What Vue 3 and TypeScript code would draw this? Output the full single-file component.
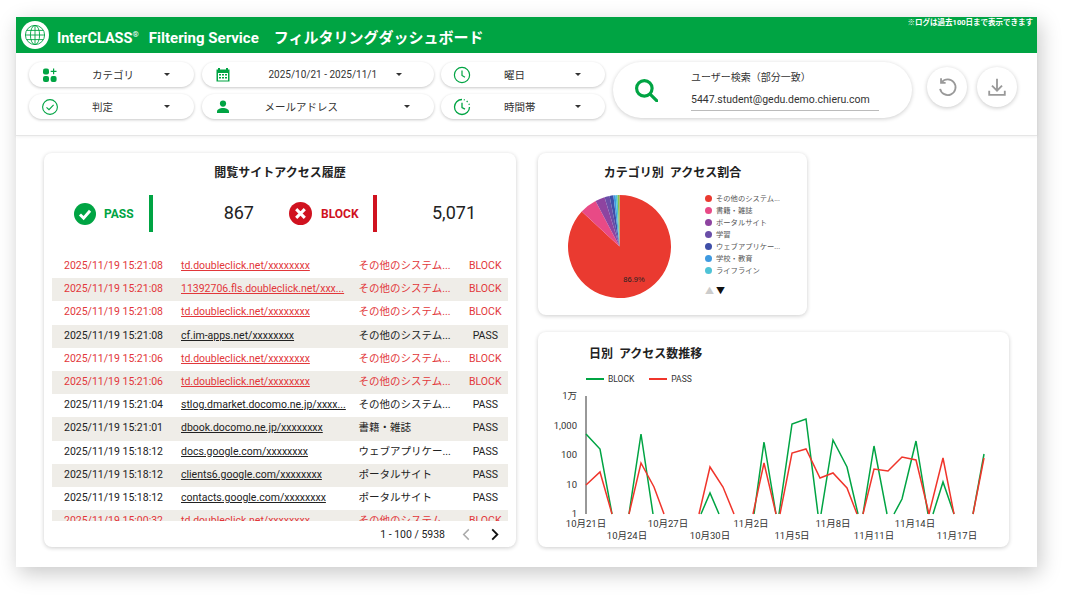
<script setup lang="ts">
type LogRow = { time: string; url: string; category: string; status: 'BLOCK' | 'PASS' }

const doubleclick = 'td.doubleclick.net/xxxxxxxx'
const other = 'その他のシステム...'

const rows: LogRow[] = [
  { time: '2025/11/19 15:21:08', url: doubleclick, category: other, status: 'BLOCK' },
  { time: '2025/11/19 15:21:08', url: '11392706.fls.doubleclick.net/xxx...', category: other, status: 'BLOCK' },
  { time: '2025/11/19 15:21:08', url: doubleclick, category: other, status: 'BLOCK' },
  { time: '2025/11/19 15:21:08', url: 'cf.im-apps.net/xxxxxxxx', category: other, status: 'PASS' },
  { time: '2025/11/19 15:21:06', url: doubleclick, category: other, status: 'BLOCK' },
  { time: '2025/11/19 15:21:06', url: doubleclick, category: other, status: 'BLOCK' },
  { time: '2025/11/19 15:21:04', url: 'stlog.dmarket.docomo.ne.jp/xxxx...', category: other, status: 'PASS' },
  { time: '2025/11/19 15:21:01', url: 'dbook.docomo.ne.jp/xxxxxxxx', category: '書籍・雑誌', status: 'PASS' },
  { time: '2025/11/19 15:18:12', url: 'docs.google.com/xxxxxxxx', category: 'ウェブアプリケー...', status: 'PASS' },
  { time: '2025/11/19 15:18:12', url: 'clients6.google.com/xxxxxxxx', category: 'ポータルサイト', status: 'PASS' },
  { time: '2025/11/19 15:18:12', url: 'contacts.google.com/xxxxxxxx', category: 'ポータルサイト', status: 'PASS' },
  { time: '2025/11/19 15:00:32', url: doubleclick, category: other, status: 'BLOCK' },
]

// pie slices, clockwise from 12 o'clock
const slices = [
  { name: 'その他のシステム...', share: 86.9, color: '#ea3a30' },
  { name: '書籍・雑誌', share: 5.4, color: '#e84a86' },
  { name: 'ポータルサイト', share: 3, color: '#8e44a0' },
  { name: '学習', share: 1.6, color: '#6a4ea8' },
  { name: 'ウェブアプリケー...', share: 1.2, color: '#3f4fa8' },
  { name: '学校・教育', share: 0.7, color: '#3f9ae0' },
  { name: 'ライフライン', share: 0.6, color: '#4fc3d6' },
  { name: 'その他', share: 0.6, color: '#8bc34a' },
]
const legend = slices.slice(0, 7)

function slicePaths() {
  const r = 51.5
  let start = 0
  return slices.map((s) => {
    const end = start + (s.share / 100) * Math.PI * 2
    const x1 = r + r * Math.sin(start)
    const y1 = r - r * Math.cos(start)
    const x2 = r + r * Math.sin(end)
    const y2 = r - r * Math.cos(end)
    const large = end - start > Math.PI ? 1 : 0
    start = end
    return { d: `M${r} ${r}L${x1} ${y1}A${r} ${r} 0 ${large} 1 ${x2} ${y2}Z`, color: s.color }
  })
}
const pie = slicePaths()

// line chart, in page coordinates (the svg viewBox starts at the card corner)
const blockLines = [
  '586,434 600,449 612,514',
  '629,514 641,434 653,514',
  '701,514 710,493 719,514',
  '754,514 764,442 776,514',
  '779,514 792,424 806,419 818,514',
  '821,514 833,440 847,467 858,514',
  '863,514 874,446 887,514',
  '894,514 902,499 916,441 928,514',
  '933,514 943,482 954,514',
  '973,514 984,454',
]
const passLines = [
  '586,485 600,472 612,514',
  '629,514 641,463 654,487 664,514',
  '699,514 710,467 723,487 734,514',
  '753,514 764,463 776,514',
  '780,514 792,453 806,449 820,478 833,473 847,488 857,514',
  '863,514 874,469 888,471 902,457 916,460 929,514',
  '929,514 943,458 954,514',
  '973,514 984,458',
]
const yTicks = [
  { label: '1万', y: 399 },
  { label: '1,000', y: 429 },
  { label: '100', y: 458 },
  { label: '10', y: 488 },
  { label: '1', y: 517 },
]
const xTicks = [
  { label: '10月21日', x: 586, y: 527 },
  { label: '10月24日', x: 627, y: 539 },
  { label: '10月27日', x: 668, y: 527 },
  { label: '10月30日', x: 710, y: 539 },
  { label: '11月2日', x: 751, y: 527 },
  { label: '11月5日', x: 792, y: 539 },
  { label: '11月8日', x: 833, y: 527 },
  { label: '11月11日', x: 874, y: 539 },
  { label: '11月14日', x: 915, y: 527 },
  { label: '11月17日', x: 957, y: 539 },
]
</script>

<template>
  <div class="page">
    <div class="window">
      <header class="topbar">
        <svg class="logo" viewBox="0 0 28 28">
          <circle cx="14" cy="14" r="14" fill="#fff" />
          <g fill="none" stroke="#00a443" stroke-width="0.9">
            <circle cx="14" cy="14" r="9.6" />
            <ellipse cx="14" cy="14" rx="4.6" ry="9.6" />
            <path d="M14 4.4v19.2M4.4 14h19.2M5.6 9.4h16.8M5.6 18.6h16.8" />
          </g>
        </svg>
        <h1 class="brand">InterCLASS<sup>®</sup><span class="brand-service">Filtering Service</span><span class="brand-jp">フィルタリングダッシュボード</span></h1>
        <span class="notice">※ログは過去100日まで表示できます</span>
      </header>

      <section class="toolbar">
        <div class="filters">
          <div class="chip">
            <svg class="chip-icon" viewBox="0 0 16 16" fill="#00a443">
              <rect x="1" y="1.5" width="6" height="6" rx="2" />
              <rect x="1" y="9" width="6" height="6" rx="2" />
              <rect x="8.6" y="9" width="6" height="6" rx="2" />
              <path d="M11 1.5h1.2v2.3h2.3V5h-2.3v2.3H11V5H8.7V3.8H11z" />
            </svg>
            <span class="chip-label">カテゴリ</span><i class="caret"></i>
          </div>
          <div class="chip">
            <svg class="chip-icon" viewBox="0 0 16 16" fill="#00a443">
              <path d="M3 1h2v1.5h6V1h2v1.500h1.500v12h-13v-12H3zM3 6v7.500h10V6z" />
              <path d="M4 7h2v1.500H4zM7 7h2v1.500H7zM10 7h2v1.500h-2zM4 10h2v1.500H4zM7 10h2v1.500H7zM10 10h2v1.500h-2z" />
            </svg>
            <span class="chip-label chip-label--date">2025/10/21 - 2025/11/1</span><i class="caret caret--date"></i>
          </div>
          <div class="chip">
            <svg class="chip-icon chip-icon--lg" viewBox="0 0 18 18" fill="none" stroke="#00a443" stroke-width="1.2">
              <circle cx="9" cy="9" r="7.600" />
              <path d="M9 4.500V9.500l3 1.800" />
            </svg>
            <span class="chip-label">曜日</span><i class="caret"></i>
          </div>
          <div class="chip">
            <svg class="chip-icon chip-icon--lg" viewBox="0 0 18 18" fill="none" stroke="#00a443" stroke-width="1.1">
              <circle cx="9" cy="9" r="7.400" />
              <path d="M5.500 9.300l2.500 2.400 4.600-4.800" />
            </svg>
            <span class="chip-label">判定</span><i class="caret"></i>
          </div>
          <div class="chip">
            <svg class="chip-icon" viewBox="0 0 16 16" fill="#00a443">
              <circle cx="8" cy="4.600" r="3.100" />
              <path d="M2 14v-1.500C2 10.300 5 9 8 9s6 1.300 6 3.500V14z" />
            </svg>
            <span class="chip-label chip-label--mail">メールアドレス</span><i class="caret caret--mail"></i>
          </div>
          <div class="chip">
            <svg class="chip-icon chip-icon--lg" viewBox="0 0 18 18" fill="none" stroke="#00a443" stroke-width="1.300">
              <path d="M9 1.500A7.500 7.500 0 1 0 16.500 9" />
              <path d="M16.400 6.800l-.5-1.100M14.600 3.900l-.9-.8M11.800 2l-1-.3" stroke-dasharray="1.500 1" />
              <path d="M9 4.800V9.500l3 1.600" />
            </svg>
            <span class="chip-label">時間帯</span><i class="caret"></i>
          </div>
        </div>

        <div class="search">
          <svg class="search-icon" viewBox="4 4 16 16" fill="none" stroke="#00a443" stroke-width="2.200">
            <circle cx="10.500" cy="10.500" r="5.400" />
            <path d="M14.500 14.500l5 5" stroke-linecap="round" />
          </svg>
          <div class="search-field">
            <span class="search-label">ユーザー検索（部分一致）</span>
            <span class="search-value">5447.student@gedu.demo.chieru.com</span>
          </div>
        </div>

        <button class="round-btn" aria-label="reset">
          <svg viewBox="0 0 24 24" fill="none" stroke="#999" stroke-width="2">
            <path d="M6.300 6.800A8.500 8.500 0 1 1 4.500 14" />
            <path d="M5.500 2.500v5h5" />
          </svg>
        </button>
        <button class="round-btn" aria-label="download">
          <svg viewBox="0 0 24 24" fill="none" stroke="#999" stroke-width="2">
            <path d="M12 3v13M6.500 10.500L12 16l5.500-5.500" />
            <path d="M3.500 16v4.500h17V16" />
          </svg>
        </button>
      </section>

      <main class="content">
        <section class="card log-card">
          <h2 class="card-title">閲覧サイトアクセス履歴</h2>
          <div class="kpis">
            <div class="kpi kpi--pass">
              <svg class="kpi-icon" viewBox="0 0 24 24">
                <circle cx="12" cy="12" r="12" fill="#00a443" />
                <path d="M6.500 12.500l4 4 7-8" fill="none" stroke="#fff" stroke-width="3.200" />
              </svg>
              <span class="kpi-name">PASS</span>
              <i class="kpi-bar"></i>
              <span class="kpi-value">867</span>
            </div>
            <div class="kpi kpi--block">
              <svg class="kpi-icon" viewBox="0 0 24 24">
                <circle cx="12" cy="12" r="12" fill="#d0121f" />
                <path d="M7.500 7.500l9 9M16.500 7.500l-9 9" fill="none" stroke="#fff" stroke-width="3.200" />
              </svg>
              <span class="kpi-name">BLOCK</span>
              <i class="kpi-bar"></i>
              <span class="kpi-value">5,071</span>
            </div>
          </div>

          <div class="log-table">
            <div
              v-for="(row, i) in rows"
              :key="i"
              class="log-row"
              :class="{ 'log-row--block': row.status === 'BLOCK', 'log-row--even': i % 2 === 1 }"
            >
              <span>{{ row.time }}</span>
              <span class="log-url">{{ row.url }}</span>
              <span>{{ row.category }}</span>
              <span class="log-status">{{ row.status }}</span>
            </div>
          </div>

          <div class="pager">
            <span>1 - 100 / 5938</span>
            <svg class="pager-arrow pager-arrow--prev" viewBox="0 0 10 14" fill="none" stroke="#aaa" stroke-width="1.600"><path d="M8 1.500L2.500 7 8 12.500" /></svg>
            <svg class="pager-arrow" viewBox="0 0 10 14" fill="none" stroke="#111" stroke-width="2"><path d="M2 1.500L7.500 7 2 12.500" /></svg>
          </div>
        </section>

        <div class="side">
          <section class="card pie-card">
            <h2 class="card-title">カテゴリ別&nbsp; アクセス割合</h2>
            <div class="pie-body">
              <svg class="pie" viewBox="0 0 103 103">
                <path v-for="p in pie" :key="p.color" :d="p.d" :fill="p.color" />
                <text x="66" y="87" class="pie-label">86.9%</text>
              </svg>
              <div class="pie-legend">
                <div v-for="s in legend" :key="s.color" class="legend-item">
                  <i class="legend-dot" :style="{ background: s.color }"></i>{{ s.name }}
                </div>
                <div class="legend-pager"><span class="legend-up">▲</span><span>▼</span></div>
              </div>
            </div>
          </section>

          <section class="card line-card">
            <h2 class="card-title card-title--left">日別&nbsp; アクセス数推移</h2>
            <div class="line-legend">
              <i class="line-key line-key--block"></i><span>BLOCK</span>
              <i class="line-key line-key--pass"></i><span>PASS</span>
            </div>
            <svg class="line-chart" viewBox="538 385 471 162">
              <path d="M586 396V514" stroke="#333" stroke-width="1" />
              <text v-for="t in yTicks" :key="t.label" x="577" :y="t.y" text-anchor="end" class="tick">{{ t.label }}</text>
              <text v-for="t in xTicks" :key="t.label" :x="t.x" :y="t.y" text-anchor="middle" class="tick">{{ t.label }}</text>
              <polyline v-for="l in blockLines" :key="l" :points="l" fill="none" stroke="#00a443" stroke-width="1.500" />
              <polyline v-for="l in passLines" :key="l" :points="l" fill="none" stroke="#f0352b" stroke-width="1.500" />
            </svg>
          </section>
        </div>
      </main>
    </div>
  </div>
</template>

<style>
html,
body {
  background: #fff;
}
</style>

<style scoped>
.page {
  height: 595px;
  box-sizing: border-box;
  padding: 17px 0 0 16px;
  overflow: hidden;
}
.window {
  width: 1021px;
  height: 550px;
  background: #fff;
  box-shadow: 3px 6px 20px rgba(0, 0, 0, 0.22);
  font-family: Roboto, 'Noto Sans CJK JP', sans-serif;
  color: #222;
  display: flex;
  flex-direction: column;
}

.topbar {
  height: 36px;
  flex: none;
  background: #00a443;
  color: #fff;
  display: flex;
  align-items: center;
  padding-left: 5px;
  position: relative;
}
.logo {
  width: 28px;
  height: 28px;
  margin-right: 8px;
}
.brand {
  margin: 2px 0 0;
  font-size: 14.5px;
  font-weight: 700;
  white-space: nowrap;
}
.brand sup {
  font-size: 8px;
  line-height: 0;
  font-weight: 500;
}
.brand-service {
  margin-left: 10px;
  font-size: 15px;
}
.brand-jp {
  margin-left: 15px;
  font-size: 15px;
}
.notice {
  position: absolute;
  top: 1px;
  right: 4px;
  font-size: 7.500px;
  font-weight: 700;
  line-height: 9px;
}

.toolbar {
  height: 83px;
  flex: none;
  box-sizing: border-box;
  border-bottom: 1px solid #e6e6e6;
  box-shadow: 0 1px 3px rgba(0, 0, 0, 0.06);
  display: flex;
  align-items: flex-start;
  padding: 9px 0 0 13px;
}
.filters {
  display: grid;
  grid-template-columns: 165px 232px 164px;
  grid-auto-rows: 25px;
  column-gap: 7.500px;
  row-gap: 7px;
}
.chip {
  display: flex;
  align-items: center;
  background: #fff;
  border-radius: 13px;
  box-shadow: 0 1px 3px rgba(0, 0, 0, 0.22);
  font-size: 10.500px;
  color: #333;
  padding-right: 24px;
}
.chip-icon {
  width: 16px;
  height: 16px;
  margin-left: 13px;
  flex: none;
}
.chip-icon--lg {
  width: 18px;
  height: 18px;
  margin-left: 12px;
}
.chip-label {
  margin-left: 34px;
  white-space: nowrap;
}
.chip-icon--lg + .chip-label {
  margin-left: 33px;
}
.chip-label--date {
  margin-left: 38px;
  font-size: 10px;
}
.caret {
  margin-left: auto;
  width: 0;
  height: 0;
  border-left: 3px solid transparent;
  border-right: 3px solid transparent;
  border-top: 3px solid #333;
}
.caret--date {
  margin-right: 8px;
}

.search {
  width: 299px;
  height: 56px;
  margin-left: 8px;
  flex: none;
  box-sizing: border-box;
  background: #fff;
  border-radius: 28px;
  box-shadow: 0 1px 4px rgba(0, 0, 0, 0.2);
  display: flex;
  align-items: center;
  padding-left: 22px;
}
.search-icon {
  width: 23px;
  height: 23px;
  flex: none;
}
.search-field {
  margin-left: 33px;
  width: 188px;
  display: flex;
  flex-direction: column;
}
.search-label {
  font-size: 10px;
  color: #333;
  margin-bottom: 9px;
  margin-top: -1px;
}
.search-value {
  font-size: 10.500px;
  color: #333;
  padding-bottom: 4px;
  border-bottom: 1px solid #bbb;
}

.round-btn {
  width: 40px;
  height: 40px;
  flex: none;
  margin: 5px 0 0 15px;
  padding: 0;
  border: none;
  border-radius: 50%;
  background: #fff;
  box-shadow: 0 1px 4px rgba(0, 0, 0, 0.22);
  display: flex;
  align-items: center;
  justify-content: center;
}
.round-btn + .round-btn {
  margin-left: 10px;
}
.round-btn svg {
  width: 22px;
  height: 22px;
}

.content {
  display: flex;
  align-items: flex-start;
  gap: 22px;
  padding: 17px 0 0 28px;
}
.card {
  background: #fff;
  border-radius: 8px;
  box-shadow: 0 1px 4px rgba(0, 0, 0, 0.2);
}
.card-title {
  margin: 0;
  font-size: 12px;
  font-weight: 700;
  text-align: center;
  color: #222;
  line-height: 14px;
}
.card-title--left {
  text-align: left;
  padding-left: 51px;
}

.log-card {
  width: 472px;
  height: 394px;
  padding-top: 13px;
  box-sizing: border-box;
}
.kpis {
  display: flex;
  margin-top: 15px;
  height: 37px;
}
.kpi {
  display: flex;
  align-items: center;
  width: 216px;
}
.kpi-icon {
  width: 22px;
  height: 22px;
  margin-left: 30px;
  flex: none;
}
.kpi-name {
  margin-left: 8px;
  font-size: 12px;
  font-weight: 700;
  width: 37px;
}
.kpi-bar {
  width: 4px;
  height: 37px;
  margin-left: 15px;
}
.kpi-value {
  font-size: 18px;
  width: 101px;
  text-align: right;
  margin-top: -3px;
  color: #222;
}
.kpi--pass {
  color: #00a443;
}
.kpi--pass .kpi-name {
  width: 30px;
}
.kpi--pass .kpi-bar {
  background: #00a443;
}
.kpi--block {
  color: #d0121f;
}
.kpi--block .kpi-icon {
  margin-left: 29px;
  width: 23px;
  height: 23px;
}
.kpi--block .kpi-name {
  margin-left: 9px;
}
.kpi--block .kpi-bar {
  background: #d0121f;
}
.kpi--block .kpi-value {
  width: 104px;
}

.log-table {
  margin: 23px 8px 0;
  height: 266px;
  overflow: hidden;
}
.log-row {
  display: grid;
  grid-template-columns: 117px 177.500px 100px 1fr;
  height: 23.200px;
  line-height: 21.500px;
  padding-left: 12px;
  font-size: 10.500px;
  color: #222;
}
.log-row span {
  white-space: nowrap;
}
.log-row--even {
  background: #efede8;
}
.log-row--block {
  color: #e2373a;
}
.log-url {
  text-decoration: underline;
}
.log-status {
  text-align: center;
  padding-left: 4px;
}

.pager {
  display: flex;
  align-items: center;
  justify-content: flex-end;
  font-size: 10.500px;
  height: 26px;
  padding-right: 16px;
  color: #222;
}
.pager-arrow {
  width: 10px;
  height: 13px;
  margin-left: 19px;
}
.pager-arrow--prev {
  margin-left: 16px;
}

.side {
  width: 471px;
  display: flex;
  flex-direction: column;
  gap: 17px;
}
.pie-card {
  width: 269px;
  height: 162px;
  box-sizing: border-box;
  padding-top: 13px;
}
.pie-body {
  display: flex;
  align-items: flex-start;
  margin-top: 15px;
  padding-left: 30px;
}
.pie {
  width: 103px;
  height: 103px;
  flex: none;
}
.pie-label {
  font-size: 7.500px;
  text-anchor: middle;
  fill: #222;
  font-family: 'Liberation Sans', sans-serif;
}
.pie-legend {
  margin: -3px 0 0 34px;
  font-size: 7.300px;
  color: #555;
}
.legend-item {
  display: flex;
  align-items: center;
  height: 12px;
  white-space: nowrap;
}
.legend-dot {
  width: 7px;
  height: 7px;
  border-radius: 50%;
  margin-right: 4px;
}
.legend-pager {
  display: flex;
  gap: 2px;
  margin-top: 9px;
  font-size: 9px;
  color: #111;
  line-height: 12px;
}
.legend-up {
  color: #ccc;
}

.line-card {
  height: 215px;
  box-sizing: border-box;
  padding-top: 15px;
}
.line-legend {
  display: flex;
  align-items: center;
  height: 13px;
  margin-top: 11px;
  padding-left: 48px;
  font-size: 8.500px;
  color: #333;
}
.line-key {
  width: 18px;
  height: 2px;
  margin-right: 4px;
}
.line-key--block {
  background: #00a443;
}
.line-key--pass {
  background: #f0352b;
  margin-left: 15px;
}
.line-chart {
  display: block;
  width: 471px;
  height: 162px;
}
.tick {
  font-size: 9.500px;
  fill: #333;
}
</style>
